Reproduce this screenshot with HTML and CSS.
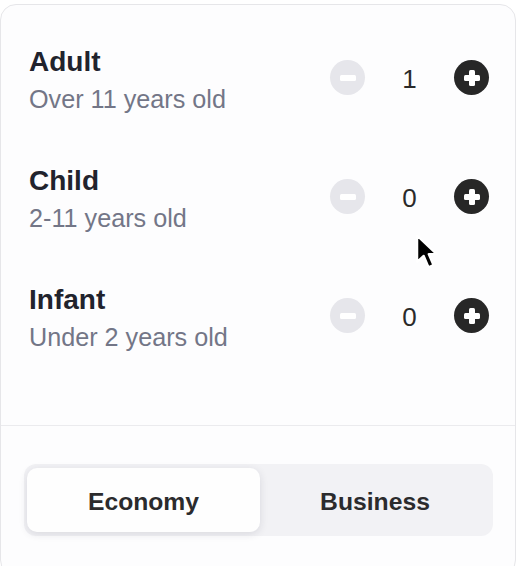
FILE: index.html
```html
<!DOCTYPE html>
<html>
<head>
<meta charset="utf-8">
<link rel="stylesheet" href="styles.css">
</head>
<body>
<div class="card">
  <div class="rows">
    <div class="row">
      <div class="label">
        <div class="title">Adult</div>
        <div class="sub">Over 11 years old</div>
      </div>
      <div class="counter">
        <span class="btn minus"><span class="bar"></span></span>
        <span class="count">1</span>
        <span class="btn plus"><span class="bar"></span><span class="bar v"></span></span>
      </div>
    </div>
    <div class="row">
      <div class="label">
        <div class="title">Child</div>
        <div class="sub">2-11 years old</div>
      </div>
      <div class="counter">
        <span class="btn minus"><span class="bar"></span></span>
        <span class="count">0</span>
        <span class="btn plus"><span class="bar"></span><span class="bar v"></span></span>
      </div>
    </div>
    <div class="row">
      <div class="label">
        <div class="title">Infant</div>
        <div class="sub">Under 2 years old</div>
      </div>
      <div class="counter">
        <span class="btn minus"><span class="bar"></span></span>
        <span class="count">0</span>
        <span class="btn plus"><span class="bar"></span><span class="bar v"></span></span>
      </div>
    </div>
  </div>
  <div class="divider"></div>
  <div class="segment">
    <div class="seg active">Economy</div>
    <div class="seg">Business</div>
  </div>
  <svg class="cursor" width="26" height="38" viewBox="0 0 24 34">
    <path d="M2 2 L2 26 L8 20.5 L12.5 31 L17 29 L12.6 19 L20 19 Z" fill="#000" stroke="#fff" stroke-width="2" stroke-linejoin="round"/>
  </svg>
</div>
</body>
</html>
```
FILE: styles.css
```css
html, body {
  margin: 0;
  padding: 0;
  background: #ffffff;
  font-family: "Liberation Sans", Arial, sans-serif;
  overflow: hidden;
}
.card {
  position: relative;
  margin-top: 4px;
  width: 516px;
  height: 572px;
  box-sizing: border-box;
  border: 1px solid #e6e6e9;
  border-radius: 16px;
  background: #fdfdfe;
  display: flex;
  flex-direction: column;
}
.rows {
  padding: 40px 26px 73px 28px;
  display: flex;
  flex-direction: column;
  gap: 50px;
}
.row {
  display: flex;
  align-items: center;
  justify-content: space-between;
}
.title {
  font-size: 28px;
  line-height: 34px;
  font-weight: bold;
  color: #21232d;
}
.sub {
  margin-top: 5px;
  font-size: 25.2px;
  line-height: 30px;
  color: #737687;
}
.counter {
  display: flex;
  align-items: center;
  margin-bottom: 4px;
}
.btn {
  position: relative;
  width: 35px;
  height: 35px;
  border-radius: 50%;
  display: flex;
  align-items: center;
  justify-content: center;
}
.minus { background: #e6e6eb; }
.plus { background: #272727; }
.bar {
  position: absolute;
  width: 16px;
  height: 6px;
  border-radius: 1.5px;
  background: #ffffff;
}
.bar.v {
  width: 6px;
  height: 16px;
}
.count {
  width: 89px;
  text-align: center;
  font-size: 26px;
  color: #2a2a2a;
  padding-top: 3px;
}
.divider {
  height: 1px;
  background: #ebebee;
}
.segment {
  margin: 38px 0 0 23px;
  width: 469px;
  height: 72px;
  box-sizing: border-box;
  padding: 4px 3px;
  border-radius: 12px;
  background: #f2f2f5;
  display: grid;
  grid-template-columns: 233px 1fr;
}
.seg {
  display: flex;
  align-items: center;
  justify-content: center;
  padding-top: 4px;
  font-size: 24.7px;
  font-weight: bold;
  color: #2b2b2d;
  border-radius: 10px;
}
.seg.active {
  background: #fefefe;
  box-shadow: 0 2px 8px rgba(30, 30, 60, 0.12);
}
.cursor {
  position: absolute;
  left: 414px;
  top: 228px;
}
```
